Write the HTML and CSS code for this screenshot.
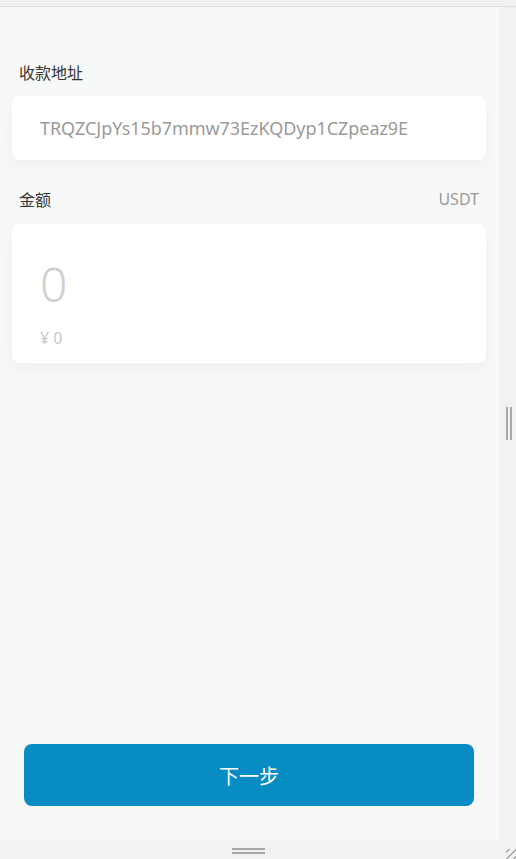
FILE: index.html
```html
<!DOCTYPE html>
<html>
<head>
<meta charset="utf-8">
<link rel="stylesheet" href="styles.css">
</head>
<body>
<div class="frame">
  <div class="topbar"></div>
  <div class="middle">
    <div class="panel">
      <div class="content">
        <div class="label-row first"><span class="label">收款地址</span></div>
        <div class="card addr-card"><span class="addr">TRQZCJpYs15b7mmw73EzKQDyp1CZpeaz9E</span></div>
        <div class="label-row"><span class="label">金额</span><span class="unit">USDT</span></div>
        <div class="card amount-card">
          <div class="amount">0</div>
          <div class="fiat">¥ 0</div>
        </div>
      </div>
      <div class="footer"><button class="next">下一步</button></div>
    </div>
    <div class="gutter"><div class="vhandle"></div></div>
  </div>
  <div class="bottombar"><div class="hhandle"></div><div class="corner"></div></div>
</div>
</body>
</html>
```
FILE: styles.css
```css
html, body { margin: 0; padding: 0; }
body {
  font-family: "Noto Sans", "Noto Sans CJK SC", sans-serif;
  background: #f1f2f4;
}
.frame { width: 516px; height: 859px; display: flex; flex-direction: column; }
.topbar { height: 6px; background: #f0f1f2; border-bottom: 1px solid #dcdee0; flex: none; }
.middle { flex: 1; display: flex; }
.panel { width: 499px; background: #f7f9f8; display: flex; flex-direction: column; justify-content: space-between; }
.gutter { flex: 1; background: #f1f2f4; position: relative; }
.vhandle { position: absolute; left: 7px; top: 400px; width: 6px; height: 33px;
  border-left: 2px solid #a8a8a8; border-right: 2px solid #a8a8a8; box-sizing: border-box; }
.bottombar { height: 19px; background: #f1f2f4; position: relative; flex: none; }
.hhandle { position: absolute; left: 232px; top: 8px; width: 33px; height: 6px;
  border-top: 2px solid #a8a8a8; border-bottom: 2px solid #a8a8a8; box-sizing: border-box; }
.corner { position: absolute; right: 0; bottom: 0; width: 10px; height: 10px;
  background: repeating-linear-gradient(135deg, transparent 0 2px, #a8a8a8 2px 3px, transparent 3px 5px); }
.content { padding: 0 13px 0 12px; }
.label-row { display: flex; justify-content: space-between; align-items: center; padding: 0 7px; height: 22px; margin: 28px 0 14px; }
.label-row.first { margin-top: 54px; margin-bottom: 13px; }
.label { font-size: 16px; color: #333; font-family: "Noto Sans CJK SC", sans-serif; }
.unit { font-size: 16px; color: #999; }
.card { background: #fff; border-radius: 8px; box-shadow: 0 6px 16px rgba(0,0,0,0.04); }
.addr-card { height: 64px; display: flex; align-items: center; padding-left: 28px; }
.addr { font-size: 18px; color: #9a9a9a; letter-spacing: -0.05px; }
.amount-card { height: 139px; padding: 30px 28px 0; box-sizing: border-box; }
.amount { font-size: 48px; line-height: 60px; color: #cfcfcf; font-weight: 300; }
.fiat { font-size: 16px; color: #c8c8c8; margin-top: 13px; line-height: 22px; }
.footer { padding: 0 25px 34px 24px; }
.next { width: 100%; height: 62px; border: none; border-radius: 8px; background: #078cc3; color: #fff;
  font-size: 20px; font-family: "Noto Sans CJK SC", sans-serif; }
```
